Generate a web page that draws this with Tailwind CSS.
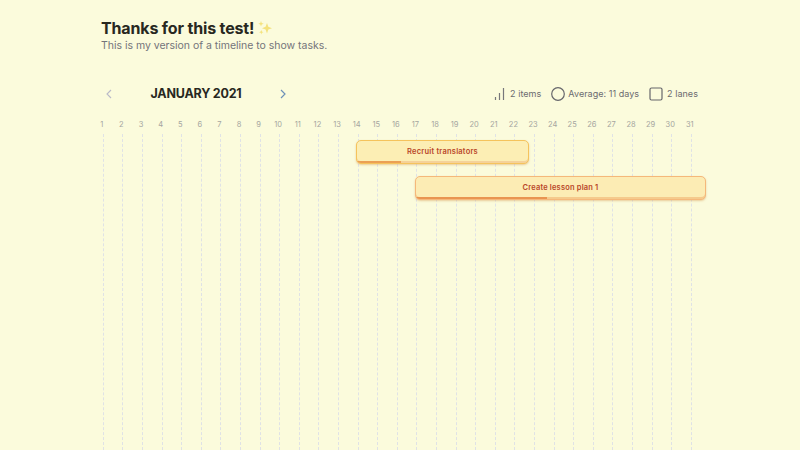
<!DOCTYPE html>
<html lang="en"><head><meta charset="utf-8"><title>Timeline</title>
<script src="https://cdn.jsdelivr.net/npm/@tailwindcss/browser@4"></script></head>
<body class="h-[450px] overflow-hidden bg-[#fbfbdc] font-['Inter',sans-serif] text-[#6b6b70]">
<main class="ml-[101px] flex h-full w-[606px] flex-col pt-[18px]">
<header>
<h1 class="flex h-5 items-center gap-[4px] whitespace-nowrap text-[16px] leading-5 font-bold text-[#28281f]"><span class="tracking-[-0.15px]">Thanks for this test!</span>
<svg class="h-[14px] w-[14px]" viewBox="0 0 14 14" fill="#f4e27c"><path d="M9 2l1.3 3.8L14 7.2l-3.7 1.4L9 12.4 7.6 8.6 4 7.2l3.6-1.4zM3 0l.7 2 2 .7-2 .8L3 5.5l-.7-2-2-.8 2-.7zM3.3 9l.6 1.6 1.6.6-1.6.6-.6 1.7-.6-1.7-1.6-.6 1.6-.6z"/></svg></h1>
<p class="h-4 whitespace-nowrap text-[10.5px] leading-4 tracking-[-0.02px] text-[#74747a]">This is my version of a timeline to show tasks.</p>
</header>
<div class="mt-[30px] flex h-5 items-center justify-between pr-[9px]">
<div class="flex w-[185px] items-center justify-between pl-[5px]">
<svg class="h-[10px] w-[6px]" viewBox="0 0 6 10" fill="none" stroke="#b9b9c8" stroke-width="1.1"><path d="M5 1L1 5l4 4"/></svg>
<h2 class="whitespace-nowrap text-[12.5px] font-bold tracking-[-0.22px] text-[#28281f]">JANUARY 2021</h2>
<svg class="h-[10px] w-[6px]" viewBox="0 0 6 10" fill="none" stroke="#6e91b8" stroke-width="1.2"><path d="M1 1l4 4-4 4"/></svg>
</div>
<div class="flex items-center gap-[10px] whitespace-nowrap text-[9px]">
<div class="flex items-center gap-[5px]"><svg class="h-[14px] w-[11px]" viewBox="0 0 11 14" stroke="#77777b" stroke-width="1.2"><path d="M1.5 10v3M5.5 6v7M9.5 1v12"/></svg><span class="tracking-[0.05px]">2 items</span></div>
<div class="flex items-center gap-[3px]"><svg class="h-[14px] w-[14px]" viewBox="0 0 14 14" fill="none" stroke="#66666b" stroke-width="1.2"><circle cx="7" cy="7" r="6.3"/></svg><span class="tracking-[0.03px]">Average: 11 days</span></div>
<div class="flex items-center gap-[4px]"><svg class="h-[14px] w-[14px]" viewBox="0 0 14 14" fill="none" stroke="#66666b" stroke-width="1.2"><rect x="1" y="1" width="12" height="12" rx="1.5"/></svg><span class="tracking-[0.06px]">2 lanes</span></div>
</div></div>
<div class="relative mt-[15px] flex-1">
<div id="days" class="-ml-[9px] grid h-full w-[607.6px] grid-cols-31 text-[7.5px] leading-[11px] text-[#a5a5a0]"></div>
<div class="absolute top-[21px] left-[255px] flex h-6 w-[173px] items-center justify-center overflow-hidden rounded-[5px] border border-[#f5c35c] bg-[#fceeb4] text-[7.5px] font-semibold tracking-[0.22px] text-[#b94728] shadow-[0_1px_2px_#d9a05a80,inset_0_-2px_0_#f5d29a]"><span class="absolute bottom-0 left-0 h-[2px] w-[44px] bg-[#eba054]"></span><span>Recruit translators</span></div>
<div class="absolute top-[57px] left-[314px] flex h-6 w-[291px] items-center justify-center overflow-hidden rounded-[5px] border border-[#f5b87a] bg-[#fcecb4] text-[7.5px] font-semibold tracking-[0.18px] text-[#b94728] shadow-[0_1px_2px_#d9a05a80,inset_0_-2px_0_#f5ca8c]"><span class="absolute bottom-0 left-0 h-[2px] w-[131px] bg-[#e99450]"></span><span>Create lesson plan 1</span></div>
</div></main>
<script>
const days = document.getElementById('days');
for (let i = 1; i <= 31; i++) days.insertAdjacentHTML('beforeend', `<div class="flex flex-col items-center"><span>${i}</span><i class="mt-1 ml-[3px] w-0 flex-1 border-l border-dashed border-[#dfe2e6]"></i></div>`);
</script>
</body></html>
